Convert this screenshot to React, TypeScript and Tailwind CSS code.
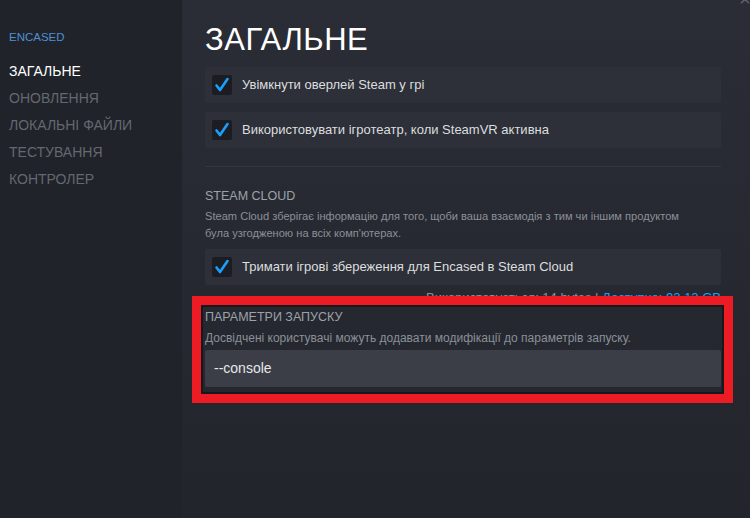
import { ChevronUp } from 'lucide-react';

const navItems = ['ЗАГАЛЬНЕ', 'ОНОВЛЕННЯ', 'ЛОКАЛЬНІ ФАЙЛИ', 'ТЕСТУВАННЯ', 'КОНТРОЛЕР'];

function CheckMark() {
  return (
    <span className="flex h-[20px] w-[20px] shrink-0 items-center justify-center rounded-[2px] bg-[#1b1d23]">
      <svg width="16" height="16" viewBox="0 0 16 16" fill="none">
        <path d="M2.5 8.5 L6 13 L13.5 2" stroke="#1a9fff" strokeWidth="2.6" strokeLinecap="round" strokeLinejoin="round" />
      </svg>
    </span>
  );
}

function CheckRow({ label }: { label: string }) {
  return (
    <div className="flex h-[36px] items-center gap-[10px] rounded-[2px] bg-[#2d3038] px-[7px]">
      <CheckMark />
      <span className="text-[13px] text-[#dcdedf]">{label}</span>
    </div>
  );
}

export default function App() {
  return (
    <div className="flex h-[518px] w-[750px] overflow-hidden bg-[#23262d] font-['Liberation_Sans',Arial,sans-serif]">
      {/* Sidebar */}
      <aside className="w-[182px] shrink-0 bg-[#202329] pl-[9px] pt-[30px]">
        <div className="text-[11.5px] leading-[14px] text-[#4f8fd6]">ENCASED</div>
        <nav className="mt-[19px] flex flex-col gap-[10px]">
          {navItems.map((item, i) => (
            <div
              key={item}
              className={`text-[14px] leading-[17px] ${i === 0 ? 'text-white' : 'text-[#646870]'}`}
            >
              {item}
            </div>
          ))}
        </nav>
      </aside>

      {/* Main */}
      <main className="relative flex-1 bg-gradient-to-b from-[#2a2d35] to-[#22252c] pl-[23px] pr-[29px]">
        <ChevronUp className="absolute right-[-2px] top-[-6px] h-[14px] w-[14px] text-[#5b5f68]" strokeWidth={3} />

        <h1 className="pt-[22px] text-[31px] leading-[36px] tracking-[0.5px] text-white">ЗАГАЛЬНЕ</h1>

        <div className="mt-[9px] flex flex-col gap-[9px]">
          <CheckRow label="Увімкнути оверлей Steam у грі" />
          <CheckRow label="Використовувати ігротеатр, коли SteamVR активна" />
        </div>

        <div className="mt-[18px] h-px bg-[#343741]" />

        <section className="mt-[21px]">
          <h2 className="text-[12.5px] leading-[16px] text-[#9da2aa]">STEAM CLOUD</h2>
          <p className="mt-[4px] text-[11.1px] leading-[17px] text-[#8b9098]">
            Steam Cloud зберігає інформацію для того, щоби ваша взаємодія з тим чи іншим продуктом
            <br />
            була узгодженою на всіх комп'ютерах.
          </p>
          <div className="mt-[7px]">
            <CheckRow label="Тримати ігрові збереження для Encased в Steam Cloud" />
          </div>
          <div className="mt-[5px] text-right text-[13px] leading-[16px] text-[#8b9098]">
            Використовується: 14 bytes | <span className="text-[#1a9fff]">Доступно: 92.12 GB</span>
          </div>
        </section>

        <section className="mt-[3px]">
          <h2 className="text-[12.5px] leading-[16px] text-[#9da2aa]">ПАРАМЕТРИ ЗАПУСКУ</h2>
          <p className="mt-[5px] text-[12px] leading-[17px] text-[#8b9098]">
            Досвідчені користувачі можуть додавати модифікації до параметрів запуску.
          </p>
          <div className="mt-[3px] flex h-[37px] items-center rounded-[2px] bg-[#3b3e46] px-[9px] text-[14px] text-[#e6e8ea]">
            --console
          </div>
        </section>

        {/* Red annotation frame */}
        <div className="pointer-events-none absolute left-[10px] top-[296px] h-[107px] w-[541px] border-[9px] border-[#ed1c24] shadow-[inset_0_0_0_2px_#16181c]" />
      </main>
    </div>
  );
}
